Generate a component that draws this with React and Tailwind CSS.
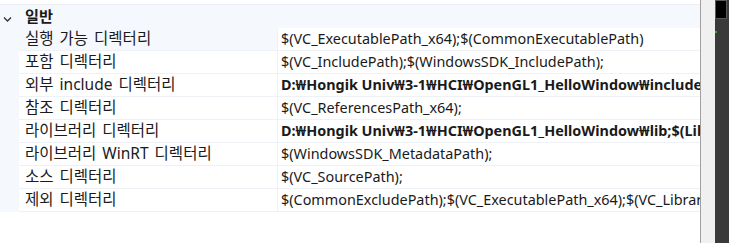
import React from 'react';

const rows = [
    { name: '실행 가능 디렉터리', value: '$(VC_ExecutablePath_x64);$(CommonExecutablePath)', selected: true },
    { name: '포함 디렉터리', value: '$(VC_IncludePath);$(WindowsSDK_IncludePath);' },
    { name: '외부 include 디렉터리', value: 'D:₩Hongik Univ₩3-1₩HCI₩OpenGL1_HelloWindow₩include;$(ExternalIncludePath)', bold: true },
    { name: '참조 디렉터리', value: '$(VC_ReferencesPath_x64);' },
    { name: '라이브러리 디렉터리', value: 'D:₩Hongik Univ₩3-1₩HCI₩OpenGL1_HelloWindow₩lib;$(LibraryPath)', bold: true },
    { name: '라이브러리 WinRT 디렉터리', value: '$(WindowsSDK_MetadataPath);' },
    { name: '소스 디렉터리', value: '$(VC_SourcePath);' },
    { name: '제외 디렉터리', value: '$(CommonExcludePath);$(VC_ExecutablePath_x64);$(VC_LibraryPath_x64)' },
];

const App = () => {
    return (
        <div className="w-[729px] h-[243px] flex bg-white overflow-hidden text-[#1a1a1a] font-['Noto_Sans','Noto_Sans_CJK_KR',sans-serif]">
            <div className="w-[700px] flex flex-col">
                <div className="h-[5px] border-b border-[#eceff3]" />

                {/* Category header */}
                <div className="h-[23px] bg-[#f5f8fc] flex items-center">
                    <svg width="19" height="23" viewBox="0 0 19 23" className="shrink-0">
                        <path d="M4 12.5 L7.5 16 L11 12.5" fill="none" stroke="#333" strokeWidth="1.3" />
                    </svg>
                    <span className="pl-[6px] text-[15.2px] font-bold leading-none">일반</span>
                </div>

                {rows.map((row) => (
                    <div key={row.name} className="flex h-[23px]">
                        <div className="w-[19px] bg-[#f5f8fc] shrink-0" />
                        <div className={`w-[259px] shrink-0 flex items-center pl-[6px] border-b border-r border-[#eef1f5] text-[15.5px] [word-spacing:2px] leading-none whitespace-nowrap ${row.selected ? 'bg-[#f5f8fc]' : ''}`}>
                            {row.name}
                        </div>
                        <div className={`flex-1 flex items-center pl-[3px] border-b border-[#eef1f5] text-[14.4px] leading-none whitespace-nowrap overflow-hidden ${row.bold ? 'font-bold' : ''}`}>
                            {row.value}
                        </div>
                    </div>
                ))}
            </div>

            {/* scrollbar strip */}
            <div className="w-[15px] border-l border-[#a0a0a0] bg-[#f0f0f0]" />

            {/* dark neighbour window */}
            <div className="w-[14px] bg-[#3a3a3a] flex flex-col">
                <div className="h-[19px] bg-black border border-[#5a5a5a] mr-[2px]" />
                <div className="mt-[12px] w-[2px] h-[2px] bg-[#3fa33f]" />
            </div>
        </div>
    );
};

export default App;
